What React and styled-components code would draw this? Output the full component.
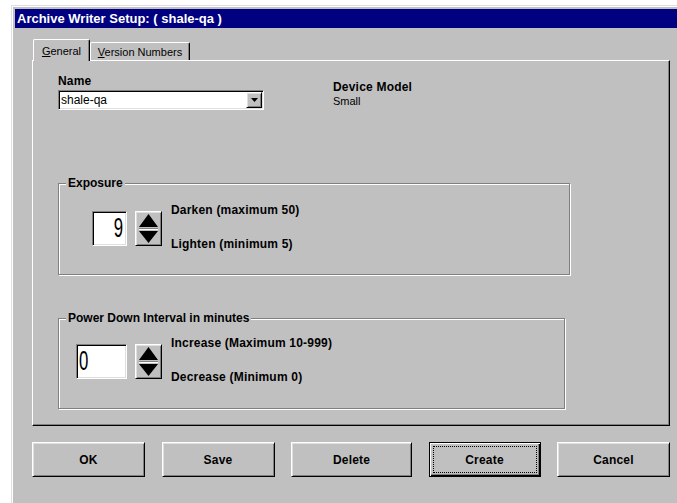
import React from 'react';
import styled, { createGlobalStyle, css } from 'styled-components';

const GlobalStyle = createGlobalStyle`
  html, body {
    margin: 0;
    padding: 0;
    background: #fff;
    overflow: hidden;
  }
  body {
    font-family: "Liberation Sans", Arial, sans-serif;
    font-size: 11px;
    color: #000;
  }
`;

// classic 3D edges
const raised = css`
  border-top: 1px solid #fff;
  border-left: 1px solid #fff;
  border-right: 1px solid #000;
  border-bottom: 1px solid #000;
  box-shadow: inset 1px 1px 0 #dfdfdf, inset -1px -1px 0 #808080;
`;

const sunken = css`
  border-top: 1px solid #808080;
  border-left: 1px solid #808080;
  border-right: 1px solid #fff;
  border-bottom: 1px solid #fff;
  box-shadow: inset 1px 1px 0 #000, inset -1px -1px 0 #dfdfdf;
`;

const Window = styled.div`
  box-sizing: border-box;
  margin: 5px 0 0 11px;
  width: 666px;
  height: 498px;
  background: #c0c0c0;
  border-top: 1px solid #dfdfdf;
  border-left: 1px solid #dfdfdf;
  box-shadow: inset 1px 1px 0 #fff;
  padding: 3px 0 0 3px;
  display: flex;
  flex-direction: column;
`;

const TitleBar = styled.div`
  height: 19px;
  background: #000080;
  color: #fff;
  font-weight: bold;
  font-size: 13px;
  padding-left: 2px;
  display: flex;
  align-items: center;
  white-space: nowrap;
`;

const Body = styled.div`
  padding: 11px 7px 0 17px;
`;

const TabStrip = styled.div`
  display: flex;
  align-items: flex-end;
  height: 21px;
  padding-left: 1px;
  position: relative;
  z-index: 2;
`;

const Tab = styled.div`
  box-sizing: border-box;
  width: ${p => p.$width}px;
  height: ${p => (p.$active ? 22 : 18)}px;
  margin-bottom: ${p => (p.$active ? -1 : 0)}px;
  padding-top: ${p => (p.$active ? 4 : 2)}px;
  background: #c0c0c0;
  border-top: 1px solid #fff;
  border-left: 1px solid #fff;
  border-right: 1px solid #000;
  border-top-left-radius: 2px;
  border-top-right-radius: 2px;
  box-shadow: inset -1px 0 0 #808080;
  font-size: 11px;
  line-height: 14px;
  text-align: center;
  white-space: nowrap;

  u {
    text-decoration: underline;
    text-underline-offset: 1px;
  }
`;

const Panel = styled.div`
  box-sizing: border-box;
  height: 366px;
  border-top: 1px solid #fff;
  border-left: 1px solid #fff;
  border-right: 1px solid #000;
  border-bottom: 1px solid #000;
  box-shadow: inset -1px -1px 0 #808080;
  padding: 13px 0 0 25px;
`;

const TopRow = styled.div`
  display: flex;
`;

const NameField = styled.div`
  width: 206px;
`;

const Label = styled.div`
  font-weight: bold;
  font-size: 12px;
  line-height: 14px;
  letter-spacing: 0.2px;
  white-space: nowrap;
`;

const Value = styled.div`
  font-size: 11px;
  line-height: 14px;
`;

const DeviceModel = styled.div`
  margin: 6px 0 0 69px;
`;

const Combo = styled.div`
  ${sunken};
  box-sizing: border-box;
  margin-top: 2px;
  width: 206px;
  height: 20px;
  background: #fff;
  display: flex;
  align-items: center;
  padding-left: 2px;
  font-size: 12px;
`;

const DropButton = styled.div`
  ${raised};
  box-sizing: border-box;
  margin: 0 1px 0 auto;
  width: 16px;
  height: 16px;
  background: #c0c0c0;
  display: flex;
  align-items: center;
  justify-content: center;
`;

const Group = styled.fieldset`
  box-sizing: border-box;
  margin: ${p => p.$top}px 0 0 0;
  width: ${p => p.$width}px;
  padding: ${p => p.$padTop}px 0 ${p => p.$padBottom}px 0;
  border: 1px solid #808080;
  box-shadow: inset 1px 1px 0 #fff, 1px 1px 0 #fff;
  min-width: 0;
`;

const Legend = styled.legend`
  margin-left: 7px;
  padding: 0 2px;
  font-weight: bold;
  font-size: 12px;
  line-height: 14px;
  background: #c0c0c0;
`;

const SpinRow = styled.div`
  display: flex;
  align-items: flex-start;
  padding-left: ${p => p.$inset}px;
`;

const SpinField = styled.div`
  ${sunken};
  box-sizing: border-box;
  width: ${p => p.$width}px;
  height: 35px;
  background: #fff;
  display: flex;
  align-items: center;
  justify-content: ${p => (p.$right ? 'flex-end' : 'flex-start')};
  padding: 0 ${p => (p.$right ? 3 : 0)}px 0 ${p => (p.$right ? 0 : 2)}px;
  overflow: hidden;
`;

const Digits = styled.span`
  display: inline-block;
  font-family: "Liberation Sans", Arial, sans-serif;
  font-weight: normal;
  font-size: 27px;
  line-height: 27px;
  color: #000;
  transform: scaleX(0.62);
  transform-origin: ${p => (p.$right ? 'right' : 'left')} center;
`;

const SpinButton = styled.div`
  ${raised};
  box-sizing: border-box;
  margin-left: 8px;
  width: 27px;
  height: 35px;
  background: #c0c0c0;
  display: flex;
  align-items: center;
  justify-content: center;
`;

const Hints = styled.div`
  display: flex;
  flex-direction: column;
  gap: 20px;
  margin: -8px 0 0 9px;
`;

const ButtonRow = styled.div`
  margin-top: 16px;
  display: flex;
  justify-content: space-between;
`;

const Button = styled.div`
  ${raised};
  box-sizing: border-box;
  position: relative;
  width: ${p => p.$width}px;
  height: 35px;
  display: flex;
  align-items: center;
  justify-content: center;
  font-weight: bold;
  font-size: 12px;
  letter-spacing: 0.2px;
  background: #c0c0c0;

  ${p =>
    p.$default &&
    css`
      border: 1px solid #000;
      box-shadow: inset 1px 1px 0 #fff, inset -1px -1px 0 #000, inset -2px -2px 0 #808080;

      &::after {
        content: '';
        position: absolute;
        inset: 3px;
        border: 1px dotted #000;
      }
    `}
`;

const DownArrow = () => (
  <svg width="7" height="4" viewBox="0 0 7 4">
    <polygon points="0,0 7,0 3.5,4" fill="#000" />
  </svg>
);

const SpinArrows = () => (
  <svg width="23" height="31" viewBox="0 0 23 31">
    <polygon points="11.5,1 21,14 2,14" fill="#000" />
    <rect x="2" y="15" width="19" height="1" fill="#808080" />
    <rect x="2" y="16" width="19" height="1" fill="#fff" />
    <polygon points="2,18 21,18 11.5,30" fill="#000" />
  </svg>
);

const Spinner = ({ value, width, right, inset, top, bottom }) => (
  <SpinRow $inset={inset}>
    <SpinField $width={width} $right={right}>
      <Digits $right={right}>{value}</Digits>
    </SpinField>
    <SpinButton>
      <SpinArrows />
    </SpinButton>
    <Hints>
      <Label>{top}</Label>
      <Label>{bottom}</Label>
    </Hints>
  </SpinRow>
);

const buttons = [
  { label: 'OK', width: 113 },
  { label: 'Save', width: 113 },
  { label: 'Delete', width: 121 },
  { label: 'Create', width: 112, isDefault: true },
  { label: 'Cancel', width: 113 },
];

export default function App() {
  return (
    <>
      <GlobalStyle />
      <Window>
        <TitleBar>Archive Writer Setup: ( shale-qa )</TitleBar>
        <Body>
          <TabStrip>
            <Tab $active $width={57}>
              <u>G</u>eneral
            </Tab>
            <Tab $width={100}>
              <u>V</u>ersion Numbers
            </Tab>
          </TabStrip>
          <Panel>
            <TopRow>
              <NameField>
                <Label>Name</Label>
                <Combo>
                  shale-qa
                  <DropButton>
                    <DownArrow />
                  </DropButton>
                </Combo>
              </NameField>
              <DeviceModel>
                <Label>Device Model</Label>
                <Value>Small</Value>
              </DeviceModel>
            </TopRow>

            <Group $top={66} $width={512} $padTop={21} $padBottom={23}>
              <Legend>Exposure</Legend>
              <Spinner
                value="9"
                width={35}
                right
                inset={33}
                top="Darken (maximum 50)"
                bottom="Lighten (minimum 5)"
              />
            </Group>

            <Group $top={36} $width={507} $padTop={19} $padBottom={24}>
              <Legend>Power Down Interval in minutes</Legend>
              <Spinner
                value="0"
                width={51}
                inset={17}
                top="Increase (Maximum 10-999)"
                bottom="Decrease (Minimum 0)"
              />
            </Group>
          </Panel>
          <ButtonRow>
            {buttons.map(b => (
              <Button key={b.label} $width={b.width} $default={b.isDefault}>
                {b.label}
              </Button>
            ))}
          </ButtonRow>
        </Body>
      </Window>
    </>
  );
}
